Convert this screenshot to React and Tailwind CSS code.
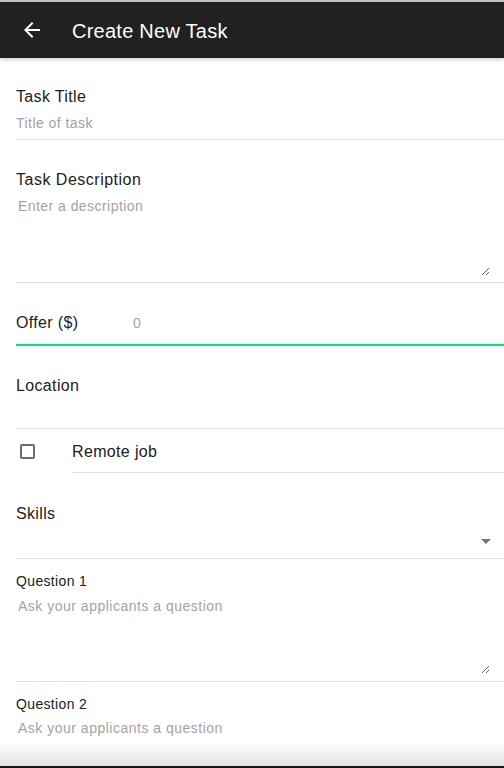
import React from 'react';

const font = { fontFamily: '"Liberation Sans", Arial, sans-serif' };

const ArrowBack = () => (
  <svg width="24" height="24" viewBox="0 0 24 24" fill="white">
    <path d="M20 11H7.83l5.59-5.59L12 4l-8 8 8 8 1.41-1.41L7.83 13H20v-2z" />
  </svg>
);

const App = () => {
  return (
    <div className="relative min-h-[768px] bg-white text-[#212121]" style={font}>
      <div className="h-[2px] bg-[#c4c4c4]" />
      {/* Top bar */}
      <div className="relative z-10 h-[56px] bg-[#212121] flex items-center shadow-[0_2px_4px_rgba(0,0,0,0.18)]">
        <div className="w-[72px] pl-[20px] flex items-center">
          <ArrowBack />
        </div>
        <h1 className="text-[20px] leading-[24px] tracking-[0.25px] text-white pt-[2px]">Create New Task</h1>
      </div>

      {/* Task title */}
      <div className="ml-4 border-b border-[#e0e0e0] pt-[29px] pb-[6px]">
        <label className="block text-[16px] leading-[20px] tracking-[0.35px]">Task Title</label>
        <input
          placeholder="Title of task"
          className="mt-[6px] block w-full text-[14px] leading-[20px] h-[20px] tracking-[0.45px] outline-none placeholder:text-[#a3a3a3]"
        />
      </div>

      {/* Description */}
      <div className="ml-4 border-b border-[#e0e0e0] pt-[30px] pb-[6px]">
        <label className="block text-[16px] leading-[20px] tracking-[0.5px]">Task Description</label>
        <textarea
          placeholder="Enter a description"
          className="mt-[6px] block w-[474px] h-[80px] pl-[2px] text-[14px] leading-[20px] tracking-[0.45px] outline-none placeholder:text-[#a3a3a3]"
        />
      </div>

      {/* Offer */}
      <div className="ml-4 border-b-2 border-[#00e66e] pt-[30px] pb-[11px] flex items-center">
        <label className="w-[117px] text-[16px] leading-[20px] tracking-[0.35px]">Offer ($)</label>
        <input
          placeholder="0"
          className="flex-1 text-[14px] leading-[20px] h-[20px] outline-none placeholder:text-[#a3a3a3]"
        />
      </div>

      {/* Location */}
      <div className="ml-4 border-b border-[#e0e0e0] pt-[30px] pb-[32px]">
        <label className="block text-[16px] leading-[20px] tracking-[0.35px]">Location</label>
      </div>

      {/* Remote */}
      <div className="ml-4 flex items-stretch">
        <div className="w-[56px] flex items-center pl-[4px]">
          <div className="w-[15px] h-[15px] border-2 border-[#6e6e6e] rounded-[2px]" />
        </div>
        <div className="flex-1 h-[44px] pt-[2px] border-b border-[#e0e0e0] flex items-center text-[16px] leading-[20px] tracking-[0.35px]">
          Remote job
        </div>
      </div>

      {/* Skills */}
      <div className="ml-4 border-b border-[#e0e0e0] pt-[31px]">
        <label className="block text-[16px] leading-[20px] tracking-[0.35px]">Skills</label>
        <div className="h-[34px] flex items-center justify-end pr-[13px]">
          <svg width="10" height="5" viewBox="0 0 10 5">
            <path d="M0 0h10L5 5z" fill="#757575" />
          </svg>
        </div>
      </div>

      {/* Question 1 */}
      <div className="ml-4 border-b border-[#e0e0e0] pt-[12px] pb-[7px]">
        <label className="block text-[14px] leading-[20px] tracking-[0.35px]">Question 1</label>
        <textarea
          placeholder="Ask your applicants a question"
          className="mt-[5px] block w-[474px] h-[78px] pl-[2px] text-[14px] leading-[20px] tracking-[0.5px] outline-none placeholder:text-[#a3a3a3]"
        />
      </div>

      {/* Question 2 */}
      <div className="ml-4 pt-[12px] pb-[7px]">
        <label className="block text-[14px] leading-[20px] tracking-[0.35px]">Question 2</label>
        <textarea
          placeholder="Ask your applicants a question"
          className="mt-[4px] block w-[474px] h-[78px] pl-[2px] text-[14px] leading-[20px] tracking-[0.5px] outline-none placeholder:text-[#a3a3a3]"
        />
      </div>

      {/* window edge at the bottom */}
      <div className="fixed left-0 right-0 bottom-0 pointer-events-none">
        <div className="h-[24px] bg-gradient-to-b from-transparent to-[#e2e2e2]" />
        <div className="h-[2px] bg-[#1a1a1a]" />
      </div>
    </div>
  );
};

export default App;
